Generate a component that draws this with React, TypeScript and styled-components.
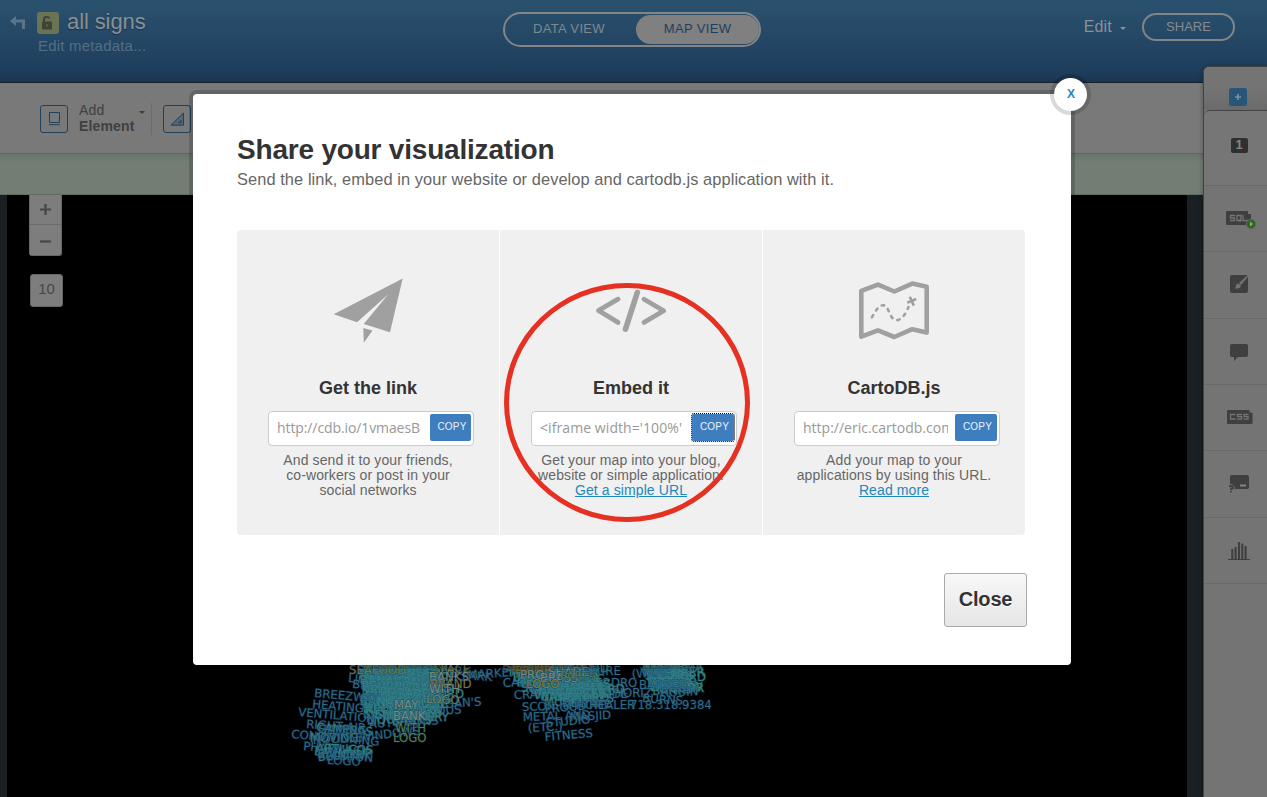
import React from "react";
import styled, { createGlobalStyle, css } from "styled-components";

const Global = createGlobalStyle`
  * { box-sizing: border-box; }
  body { margin: 0; background: #000; font-family: "Liberation Sans", Arial, sans-serif; }
`;

const Page = styled.div`
  position: relative;
  display: flex;
  flex-direction: column;
  width: 1267px;
  height: 797px;
  overflow: hidden;
`;

/* ---------- header ---------- */
const Header = styled.header`
  flex: none;
  display: flex;
  height: 83px;
  padding: 12px 32px 0 9px;
  background: linear-gradient(#2a526f 0, #1f3e5d 70px, #1c3a58 76px, #1a3450 82px);
  border-bottom: 1px solid #14202c;
`;
const Identity = styled.div`
  display: flex;
  width: 494px;
`;
const BackIcon = styled.svg`
  width: 18px;
  height: 20px;
  margin: 0 10px 0 0;
`;
const TitleBlock = styled.div``;
const TitleRow = styled.div`
  display: flex;
  align-items: center;
  gap: 8px;
  height: 22px;
`;
const Lock = styled.svg`
  width: 22px;
  height: 22px;
  border-radius: 3px;
  background: #6a7452;
`;
const VisName = styled.span`
  font-size: 22px;
  line-height: 22px;
  padding-bottom: 3px;
  letter-spacing: -0.1px;
  color: #8b8f92;
  text-shadow: 0 1px 1px #1b3247;
`;
const Metadata = styled.div`
  margin: 3px 0 0 1px;
  font-size: 15px;
  line-height: 18px;
  letter-spacing: 0.2px;
  color: #526f86;
`;
const Tabs = styled.nav`
  display: flex;
  width: 258px;
  height: 35px;
  padding: 1px 0 1px 0;
  border: 2px solid #858585;
  border-radius: 18px;
`;
const Tab = styled.span<{ $on?: boolean }>`
  width: ${(p) => (p.$on ? 123 : 131)}px;
  height: 29px;
  padding-right: ${(p) => (p.$on ? 0 : 3)}px;
  border-radius: 15px;
  font-size: 13px;
  line-height: 27px;
  letter-spacing: 0.35px;
  text-align: center;
  color: ${(p) => (p.$on ? "#1d3f5e" : "#7f8990")};
  background: ${(p) => (p.$on ? "#808080" : "transparent")};
`;
const Actions = styled.div`
  flex: 1;
  display: flex;
  justify-content: flex-end;
`;
const EditMenu = styled.span`
  display: flex;
  gap: 8px;
  font-size: 16px;
  line-height: 29px;
  letter-spacing: 0.2px;
  color: #8a9196;
`;
const Caret = styled.i<{ $top: number; $color: string }>`
  width: 0;
  height: 0;
  margin-top: ${(p) => p.$top}px;
  border: 3px solid transparent;
  border-top-color: ${(p) => p.$color};
  border-bottom: 0;
`;
const ShareButton = styled.span`
  width: 93px;
  height: 28px;
  margin: 1px 0 0 16px;
  border: 2px solid #808589;
  border-radius: 14px;
  font-size: 13px;
  line-height: 23px;
  text-align: center;
  color: #858b90;
`;

/* ---------- toolbar ---------- */
const Toolbar = styled.div`
  flex: none;
  display: flex;
  align-items: flex-start;
  height: 71px;
  padding: 19px 0 0 40px;
  background: #797979;
  border-bottom: 1px solid #656565;
`;
const ToolIcon = styled.svg`
  width: 28px;
  height: 28px;
  margin-top: 3px;
  border: 1px solid #20415c;
  border-radius: 3px;
`;
const ToolLabel = styled.div`
  width: 60px;
  margin-left: 11px;
  font-size: 14px;
  line-height: 16px;
  letter-spacing: 0.16px;
  color: #404040;
`;
const Divider = styled.div`
  width: 1px;
  height: 32px;
  margin: 1px 11px 0 6px;
  background: #6b6b6b;
`;
const Notice = styled.div`
  flex: none;
  height: 41px;
  background: linear-gradient(#68736a, #727e74 8px);
  border-bottom: 1px solid #616a63;
`;

/* ---------- map ---------- */
const MapArea = styled.main`
  flex: 1;
  display: flex;
  justify-content: space-between;
  background: #000;
`;
const Gutter = styled.div<{ $w: number }>`
  width: ${(p) => p.$w}px;
  background: #1a1f23;
`;
const MapControls = styled.div`
  flex: 1;
  display: flex;
  flex-direction: column;
  align-items: flex-start;
  padding-left: 22px;
`;
const ZoomBox = styled.div`
  width: 33px;
  height: 61px;
  background: #7d7d7d;
  border: 1px solid #666;
  border-top: 0;
  border-radius: 0 0 3px 3px;
`;
const ZoomGlyph = styled.svg`
  display: block;
  width: 31px;
  height: 29px;
  & + & { height: 30px; border-top: 1px solid #6b6b6b; }
`;
const ZoomLevel = styled.div`
  width: 33px;
  height: 33px;
  margin: 18px 0 0 1px;
  background: #7d7d7d;
  border: 1px solid #666;
  border-radius: 3px;
  font-size: 15px;
  line-height: 28px;
  text-align: center;
  color: #474747;
`;
const LabelLayer = styled.svg`
  position: absolute;
  left: 0;
  top: 195px;
  width: 1187px;
  height: 602px;
  font-family: "DejaVu Sans", sans-serif;
  font-size: 11.7px;
`;

type Label = [string, number, number, number?, string?];
const TEAL = "#34828a";
const BLUE = "#2f6d88";
const GREEN = "#4d7f50";
const OLIVE = "#77763a";
const PALE = "#788a7c";

const fillWords = ["SIGNS", "LIQUOR", "DELI &", "RECORD", "GROCER", "PHARMA", "BANKS", "BEAUTY", "WINDOW", "MUSIC", "BAKERY", "NAILS"];

const cluster = (x: number, y: number, rows: number, cols: number, stepX: number, angle: number, shift = 0): Label[] =>
  Array.from({ length: rows * cols }, (_, i): Label => {
    const r = Math.floor(i / cols);
    const c = i % cols;
    return [fillWords[(i * 5 + r) % 12], x + c * stepX + ((r * 7) % 6) + r * shift, y + r * 5.2 + c * 0.9, angle];
  });

const labels: Label[] = [
  ["WINDOWS", 360, 741, -6, BLUE],
  ["MY FAMOUS", 392, 717, -3, BLUE],
  ["AUTO BONS", 369, 728, -3, BLUE],
  ["LOGAN'S", 430, 709, -4, BLUE],
  ["PARK", 462, 679, 4, BLUE],
  ["PARK", 440, 674, 3, BLUE],
  ["MARKET", 468, 679, -4, BLUE],
  ["LIQUOR", 348, 682, 4, BLUE],
  ["BEAUTY", 352, 688, 4, BLUE],
  ["HARDRO", 586, 687, 0, BLUE],
  ["WOODSIDE", 562, 698, 0, BLUE],
  ["THORIZ", 607, 697, 0, BLUE],
  ["CARPET", 503, 687, -3, BLUE],
  ["CRAFTS", 514, 699, -2, BLUE],
  ...cluster(360, 671, 10, 3, 20, 2, 0),
  ...cluster(362, 667, 12, 2, 25, -2, 0),
  ...cluster(357, 674, 7, 4, 17, 0, 0.5),
  ...cluster(505, 671, 5, 4, 18, -2, 3),
  ...cluster(514, 673, 6, 3, 20, 2, 3),
  ...cluster(535, 690, 4, 2, 18, 1, 2),
  ...cluster(640, 669, 6, 1, 12, -3, 1.5),
  ...cluster(652, 672, 4, 1, 12, 3, 0.5),
  ...cluster(643, 670, 5, 2, 10, 0, 0.5),
  ["SEAFOOD", 349, 674, 0, OLIVE],
  ["BREEZWAY", 314, 697, 5, BLUE],
  ["HEATING", 312, 708, 5, BLUE],
  ["VENTILATION", 298, 716, 5, BLUE],
  ["RIGHT AIR", 306, 728, 4, BLUE],
  ["CAMERAS", 316, 731, 5],
  ["GAMING", 318, 733, 2, BLUE],
  ["CONDITIONING", 291, 738, 5, BLUE],
  ["MOVING", 310, 742, 0],
  ["NOODLE", 313, 744, -3, BLUE],
  ["PHARMACY", 303, 750, 5, BLUE],
  ["ARTLICOS", 316, 752, 2],
  ["LAUNDRY", 314, 755, 5],
  ["BLOCKUP", 318, 761, -4],
  ["BALLOON", 317, 758, 4, BLUE],
  ["LOGO", 327, 764, 3, BLUE],
  ["MAY", 394, 709, 0, PALE],
  ["BANK", 393, 720, 0, PALE],
  ["WITH", 395, 732, 0, GREEN],
  ["LOGO", 393, 742, 0, "#588446"],
  ["SPACE", 433, 673, 0, OLIVE],
  ["BANKS", 429, 681, 0, PALE],
  ["BRAND", 430, 688, 0, OLIVE],
  ["WITH", 429, 693, 0, PALE],
  ["LOGO", 426, 703, 2, "#71835c"],
  ["BLOOM", 502, 670, 2, "#7a4c20"],
  ["RAINBOW INN", 512, 671, -3, "#776420"],
  ["PRIME", 515, 675, 0, "#776420"],
  ["PRO", 520, 679, 0, PALE],
  ["SHADE", 548, 676, 0, PALE],
  ["BRASS", 540, 682, 0, PALE],
  ["PARTS", 560, 680, 0, "#4e7937"],
  ["FURE", 590, 675, 0, BLUE],
  ["LOGO", 526, 688, 0, "#817e27"],
  ["SCON. & HOME", 522, 711, -2, BLUE],
  ["HEALER", 589, 709, 0, BLUE],
  ["718.318.9384", 630, 709, 0, BLUE],
  ["METAL AND", 523, 721, -2, BLUE],
  ["MASJID", 570, 721, -3, BLUE],
  ["PROUD", 545, 713, -5, BLUE],
  ["(ETC.)", 528, 732, -3, BLUE],
  ["STUDIO", 546, 727, -5, BLUE],
  ["FITNESS", 545, 741, -5, BLUE],
  ["(WARE", 632, 678, -4, BLUE],
  ["BARBER", 639, 689, 0, BLUE],
  ["ROBIN", 661, 697, -3, BLUE],
  ["BURNS", 642, 702, 4, BLUE],
];

/* ---------- side panel ---------- */
const SidePanel = styled.aside`
  position: absolute;
  right: 0;
  top: 66px;
  display: flex;
  flex-direction: column;
  width: 64px;
  height: 731px;
  border: solid #414446;
  border-width: 1px 0 0 1px;
  border-radius: 6px 0 0 0;
  background: #747474;
  box-shadow: -1px 0 4px rgba(0, 0, 0, 0.25);
`;
const SideItem = styled.div<{ $h: number; $kind?: "add" | "first" }>`
  flex: none;
  display: flex;
  justify-content: center;
  align-items: center;
  height: ${(p) => p.$h}px;
  padding: 0 0 2px 7px;
  border-bottom: ${(p) => (p.$kind === "add" ? 0 : 1)}px solid #696969;
  ${(p) =>
    p.$kind === "add" &&
    css`
      padding: 17px 0 0 4px;
      border-radius: 5px 0 0 0;
      background: linear-gradient(#747474 50%, #6a6a6a);
    `}
  ${(p) =>
    p.$kind === "first" &&
    css`
      padding-bottom: 6px;
      border-top: 1px solid #434343;
      border-radius: 6px 0 0 0;
      background: #767676;
    `}
`;
const Glyph = styled.svg`
  width: 30px;
  height: 30px;
  overflow: visible;
`;
const LayerNumber = styled.span`
  width: 17px;
  height: 15px;
  border-radius: 2px;
  background: #303030;
  color: #858585;
  font-size: 13px;
  font-weight: bold;
  line-height: 14px;
  text-align: center;
`;

/* ---------- dialog ---------- */
const Dialog = styled.section`
  position: absolute;
  left: 193px;
  top: 94px;
  width: 878px;
  height: 571px;
  padding: 40px 44px 0;
  border-radius: 4px;
  background: #fff;
  box-shadow: 0 0 0 4px rgba(0, 0, 0, 0.17);
`;
const Dismiss = styled.button`
  position: absolute;
  right: -16px;
  top: -16px;
  width: 33px;
  height: 33px;
  padding: 0 0 2px 1px;
  border: 0;
  border-radius: 50%;
  background: #fff;
  box-shadow: 0 0 0 4px rgba(0, 0, 0, 0.15);
  font: bold 12px "Liberation Sans", sans-serif;
  color: #1f87bd;
`;
const Heading = styled.h1`
  margin: 0;
  font-size: 28px;
  line-height: 32px;
  letter-spacing: -0.2px;
  color: #333;
`;
const Intro = styled.p`
  margin: 3px 0 41px;
  font-size: 16.4px;
  line-height: 20px;
  letter-spacing: 0.08px;
  color: #666;
`;
const Options = styled.div`
  display: grid;
  grid-template-columns: repeat(3, 262px);
  gap: 1px;
  width: 788px;
  height: 305px;
  border-radius: 4px;
  overflow: hidden;
`;
const Option = styled.div`
  display: flex;
  flex-direction: column;
  align-items: center;
  background: #f0f0f0;
`;
const OptionArt = styled.svg`
  flex: none;
  width: 262px;
  height: 147px;
  color: #a0a0a0;
`;
const OptionTitle = styled.h2`
  margin: 0 0 12px;
  font-size: 18px;
  line-height: 22px;
  color: #333;
`;
const CopyField = styled.div`
  display: flex;
  align-items: flex-start;
  justify-content: space-between;
  width: 206px;
  height: 35px;
  margin-left: 6px;
  padding: 2px 2px 0 8px;
  border: 1px solid #ccc;
  border-radius: 4px;
  background: #fff;
`;
const CopyValue = styled.span<{ $spacing?: number }>`
  width: 145px;
  overflow: hidden;
  white-space: nowrap;
  font: 14px/28px "Open Sans", "Noto Sans", sans-serif;
  letter-spacing: ${(p) => p.$spacing ?? 0}px;
  color: #999;
`;
const CopyButton = styled.button<{ $focused?: boolean; $width?: number }>`
  width: ${(p) => p.$width ?? 42}px;
  height: 27px;
  padding: 0 0 2px 3px;
  border: 0;
  border-radius: 2px;
  background: #3e7ebf;
  color: #eaf2fa;
  font: 10px "Liberation Sans", sans-serif;
  letter-spacing: 0.2px;
  ${(p) =>
    p.$focused &&
    css`
      outline: 1px dotted #000;
    `}
`;
const OptionText = styled.p`
  margin: 7px 0 0;
  font-size: 14px;
  line-height: 15px;
  letter-spacing: 0.1px;
  text-align: center;
  white-space: pre-line;
  color: #666;
`;
const Link = styled.a`
  color: #1f87bd;
  text-decoration: underline;
`;
const Footer = styled.div`
  display: flex;
  justify-content: flex-end;
  margin-top: 38px;
`;
const CloseButton = styled.button`
  width: 83px;
  height: 54px;
  padding: 0 0 1px;
  border: 1px solid #aaa;
  border-radius: 3px;
  background: linear-gradient(#f8f8f8, #e6e6e6);
  color: #333;
  text-shadow: 0 1px #fff;
  font: bold 20px "Liberation Sans", sans-serif;
  letter-spacing: -0.2px;
`;
const Highlight = styled.div`
  position: absolute;
  left: 504px;
  top: 283px;
  width: 246px;
  height: 239px;
  border: 5px solid #e53022;
  border-radius: 50%;
  pointer-events: none;
`;

const PlaneArt = () => (
  <OptionArt fill="currentColor">
    <path d="M96.7 84.3 165.7 48.5 151.3 64.3 120 92.2ZM165.7 48.5 153 102.2 126.7 94 151.3 64.3ZM126.3 98 135.5 100.4 126.8 112.8Z" />
  </OptionArt>
);
const CodeArt = () => (
  <OptionArt fill="none" stroke="currentColor" strokeWidth="4.8" strokeLinecap="round" strokeLinejoin="round">
    <path d="M118 69.2 98.5 80.5 118 92.4M144 69.2 163.7 80.8 144 92.4" />
    <path strokeWidth="5.6" d="M137.3 62.5 125.5 99.2" />
  </OptionArt>
);
const MapArt = () => (
  <OptionArt fill="none" stroke="currentColor" strokeWidth="4.6" strokeLinejoin="round">
    <path d="M98.3 60.8 115 54.6 131.3 61.5 149.3 53.6 163.7 56.8V102.6L149.3 99.2 131.3 107 115 100.3 98.3 106.6Z" />
    <path strokeWidth="2.6" strokeLinecap="round" strokeDasharray="2.4 5.4" d="M109 87.3C113 79 117 75 120.5 75.2 126.5 76 126 89.5 133.5 90.2 139.5 90 143.5 82 145.5 77" />
    <path strokeWidth="2.7" d="M144.3 72.8 153.2 69M146.8 66.8 150.8 75.6" />
  </OptionArt>
);

const App: React.FC = () => (
  <Page>
    <Global />
    <Header>
      <Identity>
        <BackIcon viewBox="0 0 18 20">
          <path d="M1 9 7 4V7.5H16V17H13V10.5H7V14Z" fill="#5b7488" />
        </BackIcon>
        <TitleBlock>
          <TitleRow>
            <Lock viewBox="0 0 22 22">
              <rect x="5" y="9.5" width="10" height="8" rx="1" fill="#3b4435" />
              <path d="M7 10V7.3Q7 5 9.5 5T12.5 6.5" fill="none" stroke="#3b4435" strokeWidth="2" />
              <circle cx="10" cy="13.5" r="1.2" fill="#59634a" />
            </Lock>
            <VisName>all signs</VisName>
          </TitleRow>
          <Metadata>Edit metadata...</Metadata>
        </TitleBlock>
      </Identity>
      <Tabs>
        <Tab>DATA VIEW</Tab>
        <Tab $on>MAP VIEW</Tab>
      </Tabs>
      <Actions>
        <EditMenu>
          Edit
          <Caret $top={15} $color="#8a9196" />
        </EditMenu>
        <ShareButton>SHARE</ShareButton>
      </Actions>
    </Header>
    <Toolbar>
      <ToolIcon viewBox="0 0 26 26" fill="none" stroke="#20415c">
        <path d="M8.5 6.5h10v10h-10zM8 18.7h11" />
      </ToolIcon>
      <ToolLabel>
        Add
        <br />
        <b>Element</b>
      </ToolLabel>
      <Caret $top={9} $color="#3d3d3d" />
      <Divider />
      <ToolIcon viewBox="0 0 26 26" fill="#51677a" stroke="#20415c">
        <path d="M7 19.2 19.5 7V19.2ZM14.5 16.8h2.5v-2.5z" />
      </ToolIcon>
    </Toolbar>
    <Notice />
    <MapArea>
      <Gutter $w={7} />
      <MapControls>
        <ZoomBox>
          <ZoomGlyph stroke="#474747" strokeWidth="2.2">
            <path d="M10 14.5h11M15.5 9v11" />
          </ZoomGlyph>
          <ZoomGlyph stroke="#474747" strokeWidth="2.2">
            <path d="M10 16.5h11" />
          </ZoomGlyph>
        </ZoomBox>
        <ZoomLevel>10</ZoomLevel>
      </MapControls>
      <Gutter $w={80} />
    </MapArea>
    <LabelLayer viewBox="0 195 1187 602">
      {labels.map(([text, x, y, angle = 0, color = TEAL], i) => (
        <text
          key={i}
          transform={`translate(${x} ${y}) rotate(${angle})`}
          fill={color}
          stroke={color === TEAL ? "#22606e" : "#12305a"}
          strokeOpacity="0.4"
          strokeWidth="1.5"
          paintOrder="stroke"
        >
          {text}
        </text>
      ))}
    </LabelLayer>
    <SidePanel>
      <SideItem $h={43} $kind="add">
        <Glyph viewBox="0 0 30 30">
          <rect x="6" y="6" width="18" height="18" rx="2.5" fill="#285678" />
          <path d="M15 12v6M12 15h6" stroke="#7f8e97" strokeWidth="1.7" />
        </Glyph>
      </SideItem>
      <SideItem $h={76} $kind="first">
        <LayerNumber>1</LayerNumber>
      </SideItem>
      <SideItem $h={66}>
        <Glyph viewBox="0 0 30 30">
          <path d="M3 8H24V11H27V22H3Q2 22 2 21V9Q2 8 3 8Z" fill="#3f3f3f" />
          <path d="M11 12.5H6.5V15H10.5V17.5H6M13 12.5h4v5h-4zM16 16v3M19 12v5.5h5" fill="none" stroke="#747474" strokeWidth="1.3" />
          <circle cx="27" cy="21" r="4.7" fill="#286c18" stroke="#666" />
          <path d="m26 18.5 3 2.5-3 2.5z" fill="#91a58c" />
        </Glyph>
      </SideItem>
      <SideItem $h={67}>
        <Glyph viewBox="0 0 30 30">
          <rect x="6" y="6" width="18" height="18" rx="2" fill="#3f3f3f" />
          <path d="M24.5 7 17 16 15 14 24 6Z" fill="#747474" />
          <path d="M14.5 14.5 17 17Q16 20 10.5 19.5 12.5 18 12 16 13 14.5 14.5 14.5Z" fill="#747474" />
        </Glyph>
      </SideItem>
      <SideItem $h={66}>
        <Glyph viewBox="0 0 30 30">
          <path d="M8 8H22Q24 8 24 10V19Q24 21 22 21H14L10 25V21H8Q6 21 6 19V10Q6 8 8 8Z" fill="#3f3f3f" />
        </Glyph>
      </SideItem>
      <SideItem $h={66}>
        <Glyph viewBox="0 0 30 30">
          <path d="M3.5 8.5H25V11H28V21.5H3.5Z" fill="#3f3f3f" stroke="#3f3f3f" strokeLinejoin="round" />
          <path d="M11.5 12.5H6.5V17H11.5M18 12.5H13.5V14.7H17.5V17.2H13M24.5 12.5H20V14.7H24V17.2H19.5" fill="none" stroke="#747474" strokeWidth="1.3" />
        </Glyph>
      </SideItem>
      <SideItem $h={67}>
        <Glyph viewBox="0 0 30 30">
          <path d="M8 7H23Q25 7 25 9V19Q25 21 23 21H11Q11 16 6 16V9Q6 7 8 7Z" fill="#3f3f3f" />
          <path d="M16 17.5h6" stroke="#858585" strokeWidth="2" />
          <path d="M5 18H9V20.5H7V22M7 22.8V24.5" fill="none" stroke="#444" strokeWidth="1.8" />
        </Glyph>
      </SideItem>
      <SideItem $h={66}>
        <Glyph viewBox="0 0 30 30">
          <path d="M4 24.5H26" stroke="#3f3f3f" />
          <path d="M8.3 24V14M11.6 24V12M15 24V7M18.3 24V8.5M21.6 24V11" stroke="#3f3f3f" strokeWidth="2.1" />
        </Glyph>
      </SideItem>
    </SidePanel>
    <Dialog>
      <Dismiss>X</Dismiss>
      <Heading>Share your visualization</Heading>
      <Intro>Send the link, embed in your website or develop and cartodb.js application with it.</Intro>
      <Options>
        <Option>
          <PlaneArt />
          <OptionTitle>Get the link</OptionTitle>
          <CopyField>
            <CopyValue $spacing={-0.1}>http://cdb.io/1vmaesB</CopyValue>
            <CopyButton $width={41}>COPY</CopyButton>
          </CopyField>
          <OptionText>{"And send it to your friends,\nco-workers or post in your\nsocial networks"}</OptionText>
        </Option>
        <Option>
          <CodeArt />
          <OptionTitle>Embed it</OptionTitle>
          <CopyField>
            <CopyValue $spacing={0.08}>&lt;iframe width='100%'</CopyValue>
            <CopyButton $focused>COPY</CopyButton>
          </CopyField>
          <OptionText>
            {"Get your map into your blog,\nwebsite or simple application.\n"}
            <Link>Get a simple URL</Link>
          </OptionText>
        </Option>
        <Option>
          <MapArt />
          <OptionTitle>CartoDB.js</OptionTitle>
          <CopyField>
            <CopyValue>http://eric.cartodb.com</CopyValue>
            <CopyButton>COPY</CopyButton>
          </CopyField>
          <OptionText>
            {"Add your map to your\napplications by using this URL.\n"}
            <Link>Read more</Link>
          </OptionText>
        </Option>
      </Options>
      <Footer>
        <CloseButton>Close</CloseButton>
      </Footer>
    </Dialog>
    <Highlight />
  </Page>
);

export default App;
